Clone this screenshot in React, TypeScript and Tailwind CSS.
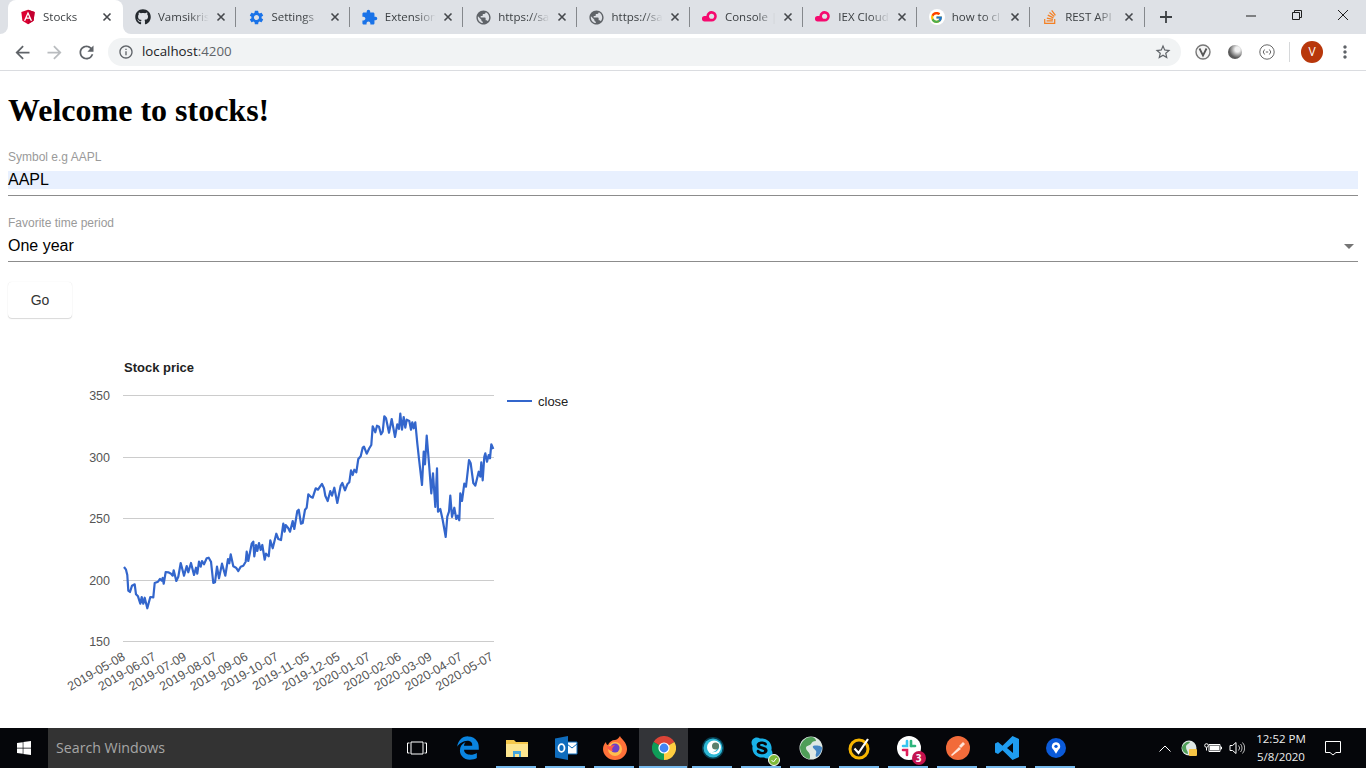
import React from 'react';
import { FaEdgeLegacy, FaGithub, FaSkype, FaStackOverflow, FaWindows } from 'react-icons/fa';
import { FcGoogle } from 'react-icons/fc';
import { MdArrowBack, MdArrowForward, MdExtension, MdInfoOutline, MdMoreVert, MdPublic, MdRefresh, MdSettings, MdStarBorder } from 'react-icons/md';

const AngularIcon = () => (
  <svg viewBox="0 0 24 24" className="w-4 h-4">
    <path d="M12 1 2 4.600l1.600 13.200L12 23l8.400-5.200L22 4.600z" fill="#dd0031" />
    <path d="M12 1v22l8.400-5.200L22 4.600z" fill="#c3002f" />
    <path d="M12 3.600 5.800 17.600h2.300l1.250-3.100h5.300l1.250 3.100h2.300zm1.800 9h-3.600L12 8.300z" fill="#fff" />
  </svg>
);

const CloudIcon = () => (
  <svg viewBox="0 0 20 16" className="w-4 h-[13px]">
    <path d="M12 0a6.500 6.500 0 0 1 0 13 H3.500a3.400 3.400 0 0 1-.4-6.800h2.400A6.500 6.500 0 0 1 12 0z" fill="#f50a6f" />
    <circle cx="12" cy="6.500" r="3.200" fill="#dee1e6" />
  </svg>
);

const tabs = [
  { label: 'Stocks', icon: <AngularIcon />, active: true },
  { label: 'Vamsikris', icon: <FaGithub className="w-4 h-4 text-[#24292e]" /> },
  { label: 'Settings', icon: <MdSettings className="w-[17px] h-[17px] text-[#1a73e8]" /> },
  { label: 'Extension', icon: <MdExtension className="w-[17px] h-[17px] text-[#1a73e8]" /> },
  { label: 'https://sa', icon: <MdPublic className="w-[17px] h-[17px] text-[#5f6368]" /> },
  { label: 'https://sa', icon: <MdPublic className="w-[17px] h-[17px] text-[#5f6368]" /> },
  { label: 'Console |', icon: <CloudIcon /> },
  { label: 'IEX Cloud', icon: <CloudIcon /> },
  { label: 'how to cl', icon: <span className="flex items-center justify-center w-4 h-4 rounded-full bg-white"><FcGoogle className="w-[13px] h-[13px]" /></span> },
  { label: 'REST API', icon: <FaStackOverflow className="w-4 h-4 text-[#f48024]" /> },
];

const TabClose = () => (
  <svg viewBox="0 0 10 10" className="w-2.5 h-2.5 shrink-0 text-[#45484c]">
    <path d="M1.500 1.500l7 7M8.500 1.500l-7 7" stroke="currentColor" strokeWidth="1.600" fill="none" />
  </svg>
);

function TabStrip() {
  return (
    <div className="flex h-[34px] bg-[#dee1e6] pl-2 relative">
      {tabs.map((tab, i) => (
        <div
          key={i}
          className={
            tab.active
              ? 'relative flex items-center w-[115px] shrink-0 pl-[12px] pr-[11px] bg-white rounded-t-lg'
              : 'relative flex items-center w-[113.4px] shrink-0 pl-[11px] pr-[10px]'
          }
        >
          {tab.active && (
            <>
              <span className="absolute -left-2 bottom-0 w-2 h-2 bg-white" />
              <span className="absolute -left-2 bottom-0 w-2 h-2 bg-[#dee1e6] rounded-br-lg" />
              <span className="absolute -right-2 bottom-0 w-2 h-2 bg-white" />
              <span className="absolute -right-2 bottom-0 w-2 h-2 bg-[#dee1e6] rounded-bl-lg" />
            </>
          )}
          <span className={tab.active ? 'flex items-center justify-center w-[18px] h-[18px] shrink-0 -ml-px' : 'flex items-center justify-center w-[18px] h-[18px] shrink-0'}>{tab.icon}</span>
          <span className="ml-[6px] flex-1 overflow-hidden whitespace-nowrap text-[11.5px] text-[#3c4043] font-['Open_Sans',sans-serif] [mask-image:linear-gradient(to_right,black_58%,transparent_94%)]">
            {tab.label}
          </span>
          <span className="ml-1"><TabClose /></span>
          {!tab.active && i > 1 && <span className="absolute -left-px top-[7px] h-[20px] w-px bg-[#85888c]" />}
          {i === tabs.length - 1 && <span className="absolute -right-px top-[7px] h-[20px] w-px bg-[#85888c]" />}
        </div>
      ))}
      <div className="flex items-center justify-center w-[44px] text-[#3c4043]">
        <svg viewBox="0 0 14 14" className="w-[14px] h-[14px]">
          <path d="M7 1v12M1 7h12" stroke="currentColor" strokeWidth="1.800" fill="none" />
        </svg>
      </div>
      <div className="ml-auto flex h-[30px] text-[#1f1f1f]">
        <div className="flex items-center justify-center w-[46px] pt-px">
          <svg viewBox="0 0 10 10" className="w-2.5 h-2.5"><path d="M0 5h10" stroke="currentColor" fill="none" /></svg>
        </div>
        <div className="flex items-center justify-center w-[46px]">
          <svg viewBox="0 0 10 10" className="w-2.5 h-2.5"><path d="M.5 2.500h7v7h-7zM2.500 2.500v-2h7v7h-2" stroke="currentColor" fill="none" /></svg>
        </div>
        <div className="flex items-center justify-center w-[46px]">
          <svg viewBox="0 0 10 10" className="w-2.5 h-2.5"><path d="M0 0l10 10M10 0 0 10" stroke="currentColor" fill="none" /></svg>
        </div>
      </div>
    </div>
  );
}

function Toolbar() {
  return (
    <div className="flex items-center h-[37px] pl-[12px] pr-[11px] bg-white border-b border-[#dadce0]">
      <MdArrowBack className="w-[21px] h-[21px] text-[#5f6368] mr-[11px]" />
      <MdArrowForward className="w-[21px] h-[21px] text-[#b9bcbf] mr-[11px]" />
      <MdRefresh className="w-[21px] h-[21px] text-[#5f6368]" />
      <div className="flex items-center ml-[11px] h-[28px] w-[1073px] rounded-full bg-[#f1f3f4] pl-[10px] pr-[9px]">
        <MdInfoOutline className="w-4 h-4 text-[#5f6368]" />
        <span className="ml-[8px] text-[13.300px] font-['Open_Sans',sans-serif] text-[#202124]">
          localhost<span className="text-[#5f6368]">:4200</span>
        </span>
        <MdStarBorder className="ml-auto w-[18px] h-[18px] text-[#5f6368]" />
      </div>
      <div className="flex items-center ml-[14px] gap-[17px]">
        <svg viewBox="0 0 16 16" className="w-4 h-4 text-[#5f6368]">
          <circle cx="8" cy="8" r="7" fill="#f4f4f4" stroke="#777" strokeWidth="1.400" />
          <path d="M4.500 4.500 8 11.500l3.500-7" stroke="#555" strokeWidth="1.800" fill="none" />
        </svg>
        <span className="w-[14px] h-[14px] rounded-full bg-[radial-gradient(circle_at_68%_32%,#f0f0f0_18%,#5a5a5a_62%)]" />
        <svg viewBox="0 0 16 16" className="w-4 h-4">
          <circle cx="8" cy="8" r="7.200" fill="none" stroke="#666" />
          <path d="M5.600 5.500 4.200 8l1.400 2.500M10.400 5.500 11.800 8l-1.400 2.500M6.800 8h2.400" stroke="#666" fill="none" />
        </svg>
        <span className="w-px h-[20px] bg-[#d6d8da] ml-[-3px] mr-[-6px]" />
        <span className="flex items-center justify-center w-[22px] h-[22px] rounded-full bg-[#b8370b] text-white text-[12px] font-['Open_Sans',sans-serif]">V</span>
        <MdMoreVert className="w-[20px] h-[20px] text-[#5f6368] -ml-[5px] -mr-[3px]" />
      </div>
    </div>
  );
}

// traced off the reference, in [x, y] page pixels at 3x
const leftTrace = [
  42,546, 48,554, 52,570, 55,617, 60,621, 66,602, 74,598, 78,628, 84,634, 91,656, 95,636, 100,656, 104,638, 112,670, 121,636, 130,637,
  134,594, 144,590, 150,582, 155,587, 158,579, 161,596, 167,561, 175,562, 183,566, 188,572, 191,556, 199,588, 205,575, 212,534, 215,545,
  222,572, 230,543, 235,562, 243,534, 252,570, 258,548, 262,566, 267,530, 272,545, 276,528, 282,538, 290,520, 296,518, 303,530, 310,594,
  315,592, 321,545, 327,580, 336,536, 346,572, 354,522, 358,535, 362,508, 370,544, 378,548, 385,558, 392,545, 400,542, 407,530, 410,500,
  415,528, 425,476, 430,470, 433,514, 438,480, 442,498, 447,474, 452,495, 457,480, 464,524, 468,506, 476,514, 481,466, 488,490, 499,446,
  505,462, 513,465, 520,416, 524,440, 527,420, 535,430, 540,440, 548,408, 553,432, 562,378, 566,374,
];
const rightTrace = [
  3,416, 8,414, 15,374, 20,368, 25,328, 32,335, 38,338, 47,310, 54,314, 60,305, 66,297, 72,310, 76,332, 83,348, 91,318, 96,332, 103,308,
  112,354, 122,302, 127,294, 135,316, 142,298, 148,292, 153,256, 158,270, 163,254, 169,262, 175,222, 182,214, 188,188, 192,185, 200,206,
  208,190, 214,180, 218,124, 226,142, 231,122, 237,125, 243,148, 248,140, 253,94, 258,100, 267,143, 275,102, 285,156, 292,118, 297,132,
  301,86, 306,134, 311,96, 316,128, 320,104, 328,108, 333,134, 337,112, 341,130, 346,112, 352,175, 357,222, 366,300, 371,200, 375,238,
  380,152, 387,235, 394,325, 399,265, 406,366, 411,250, 414,380, 421,372, 428,405, 437,456, 442,395, 447,380, 451,332, 456,396, 463,368,
  469,402, 473,392, 478,406, 481,325, 486,348, 493,296, 498,305, 507,225, 512,235, 520,294, 526,302, 536,260, 541,275, 544,232, 548,286,
  553,215, 556,205, 561,230, 566,210, 570,220, 574,178, 580,192,
];

const toPoints = (trace: number[], left: number) => {
  const out: string[] = [];
  for (let i = 0; i < trace.length; i += 2) {
    out.push(`${(left + trace[i] / 3).toFixed(1)},${(385 + trace[i + 1] / 3).toFixed(1)}`);
  }
  return out.join(' ');
};

const yTicks = [
  { label: '350', y: 395.5 },
  { label: '300', y: 457.5 },
  { label: '250', y: 518.5 },
  { label: '200', y: 580.5 },
  { label: '150', y: 641.5 },
];

const xTicks = [
  '2019-05-08', '2019-06-07', '2019-07-09', '2019-08-07', '2019-09-06', '2019-10-07', '2019-11-05',
  '2019-12-05', '2020-01-07', '2020-02-06', '2020-03-09', '2020-04-07', '2020-05-07',
];

function StockChart() {
  return (
    <svg viewBox="0 340 600 388" className="block w-[600px] h-[388px] font-['Liberation_Sans',sans-serif]">
      <text x="124" y="372" fontSize="13" fontWeight="700" fill="#222">Stock price</text>
      {yTicks.map((t) => (
        <g key={t.label}>
          <line x1="123" x2="494" y1={t.y} y2={t.y} stroke="#cccccc" />
          <text x="110" y={t.y + 4} fontSize="12.5" textAnchor="end" fill="#555">{t.label}</text>
        </g>
      ))}
      {xTicks.map((t, i) => {
        const x = 126 + i * 30.67;
        return (
          <text key={t} x={x} y={659} fontSize="12.5" textAnchor="end" fill="#555" transform={`rotate(-30 ${x} 659)`}>
            {t}
          </text>
        );
      })}
      <polyline
        points={`${toPoints(leftTrace, 110)} ${toPoints(rightTrace, 300)}`}
        fill="none"
        stroke="#3366cc"
        strokeWidth="2.200"
        strokeLinejoin="round"
      />
      <line x1="507" x2="532" y1="401" y2="401" stroke="#3366cc" strokeWidth="2" />
      <text x="538" y="405.500" fontSize="13" fill="#222">close</text>
    </svg>
  );
}

function StockForm() {
  return (
    <div className="px-2 font-['Liberation_Sans',sans-serif]">
      <h1 className="mt-[21px] mb-0 text-[32px] leading-[37px] font-bold text-black font-['Liberation_Serif',serif]">Welcome to stocks!</h1>
      <div className="mt-[21px] border-b border-[#8c8c8c] h-[46px]">
        <div className="text-[12px] leading-[14px] text-[#9a9a9a]">Symbol e.g AAPL</div>
        <div className="mt-[7px] h-[18px] bg-[#e8f0fe] text-[16px] leading-[18px] text-black">AAPL</div>
      </div>
      <div className="mt-[20px] border-b border-[#8c8c8c] h-[46px]">
        <div className="text-[12px] leading-[14px] text-[#9a9a9a]">Favorite time period</div>
        <div className="mt-[7px] flex items-center justify-between h-[18px] text-[16px] leading-[18px] text-black">
          One year
          <span className="mr-[4px] w-0 h-0 border-x-[5px] border-x-transparent border-t-[5px] border-t-[#757575]" />
        </div>
      </div>
      <button className="block mt-[20px] w-16 h-9 rounded bg-white text-[14px] text-[#333333] shadow-[0_1px_1px_rgba(0,0,0,0.14),0_0_1px_rgba(0,0,0,0.12)]">
        Go
      </button>
    </div>
  );
}

const FolderIcon = () => (
  <svg viewBox="0 0 24 24" className="w-6 h-6">
    <path d="M1 4h8l2 2h12v15H1z" fill="#f5c84c" />
    <path d="M1 8h22v13H1z" fill="#fde58f" />
    <path d="M8 15h8v6h-2v-3h-4v3H8z" fill="#46a6dc" />
  </svg>
);

const OutlookIcon = () => (
  <svg viewBox="0 0 24 24" className="w-6 h-6">
    <path d="M12 6h11v12H12z" fill="#fff" stroke="#0f6cbd" />
    <path d="M13 8l5 4 5-4" stroke="#0f6cbd" fill="none" />
    <path d="M1 2.500 14 0v24L1 21.500z" fill="#0f6cbd" />
    <ellipse cx="7.500" cy="12" rx="3" ry="3.800" fill="none" stroke="#fff" strokeWidth="1.800" />
  </svg>
);

const FirefoxIcon = () => (
  <svg viewBox="0 0 24 24" className="w-6 h-6">
    <path d="M17 0c1 3 7 6 7 13a12 11 0 1 1-24 0c0-3 1-5 3-7 0 2 1 3 2 3 1-3 4-5 7-5 1 0 3-1 5-4z" fill="#ff7139" />
    <circle cx="12" cy="13" r="7" fill="#ffbd4f" />
    <circle cx="12" cy="12" r="4.500" fill="#6e3fc9" />
    <path d="M4 10c3 1 5-1 8-1-2 2-4 4-2 6-3 0-6-2-6-5z" fill="#ff5a4a" />
  </svg>
);

const ChromeIcon = () => (
  <svg viewBox="0 0 24 24" className="w-6 h-6">
    <path d="M12 12 1.600 6A12 12 0 0 1 22.400 6z" fill="#db4437" />
    <path d="M12 12 22.400 6A12 12 0 0 1 12 24z" fill="#ffcd40" />
    <path d="M12 12 12 24A12 12 0 0 1 1.600 6z" fill="#0f9d58" />
    <circle cx="12" cy="12" r="5.600" fill="#fff" />
    <circle cx="12" cy="12" r="4.400" fill="#4285f4" />
  </svg>
);

const RingIcon = () => (
  <svg viewBox="0 0 24 24" className="w-6 h-6">
    <circle cx="12" cy="12" r="11" fill="#063f52" />
    <circle cx="12" cy="12" r="9.500" fill="#2db7d5" />
    <circle cx="13" cy="11.500" r="7" fill="#fff" />
    <path d="M9 16c5 1 9-3 8-9 3 4 0 11-8 9z" fill="#2db7d5" />
    <circle cx="14.500" cy="10" r="3.500" fill="#5c7f6c" />
  </svg>
);

const SkypeIcon = () => (
  <span className="relative block w-6 h-6">
    <FaSkype className="w-6 h-6 text-[#1ab2e8]" />
    <span className="absolute -right-1.5 -bottom-1.5 flex items-center justify-center w-[12px] h-[12px] rounded-full bg-[#7fba3a] border border-white text-white">
      <svg viewBox="0 0 8 8" className="w-2 h-2"><path d="M1.500 4l2 2 3-4" stroke="currentColor" fill="none" /></svg>
    </span>
  </span>
);

const GlobeIcon = () => (
  <svg viewBox="0 0 24 24" className="w-6 h-6">
    <circle cx="12" cy="12" r="11.500" fill="#dfe8e4" />
    <path d="M1 11C3 4 8 1 12 1c3 0 5 2 5 4-3 0-4 1-5 3s-5 1-5 4 4 4 4 8c0 2 0 3-1 3-5-1-9-6-9-12z" fill="#4f9e58" />
    <path d="M14 10c4-1 9 0 9 2s-2 8-6 9c-1-3 1-4 0-6s-4-3-3-5z" fill="#4687c4" />
  </svg>
);

const NortonIcon = () => (
  <svg viewBox="0 0 24 24" className="w-6 h-6">
    <circle cx="11" cy="13" r="9" fill="#111" stroke="#f7b500" strokeWidth="3" />
    <path d="M6.500 12.500 10.500 17 20 3" fill="none" stroke="#fff" strokeWidth="2.200" />
  </svg>
);

const SlackIcon = () => (
  <span className="relative block w-6 h-6">
    <svg viewBox="0 0 24 24" className="w-6 h-6">
      <circle cx="12" cy="12" r="12" fill="#fff" />
      <path d="M10 5v5H6" stroke="#36c5f0" strokeWidth="2.600" fill="none" strokeLinecap="round" />
      <path d="M14 5v5h0" stroke="#2eb67d" strokeWidth="2.600" fill="none" strokeLinecap="round" />
      <path d="M14 10h4" stroke="#2eb67d" strokeWidth="2.600" fill="none" strokeLinecap="round" />
      <path d="M10 19v-5H6" stroke="#e01e5a" strokeWidth="2.600" fill="none" strokeLinecap="round" />
    </svg>
    <span className="absolute -right-[5px] -bottom-[5px] flex items-center justify-center w-[14px] h-[14px] rounded-full bg-[#c4124e] text-white text-[10px] font-bold leading-none font-['Open_Sans',sans-serif]">3</span>
  </span>
);

const PostmanIcon = () => (
  <svg viewBox="0 0 24 24" className="w-6 h-6">
    <circle cx="12" cy="12" r="12" fill="#f26b3a" />
    <path d="M5 19 13 11l2 2-9 7zM13 10l4-4 2 2-4 4z" fill="#ffe3d6" />
  </svg>
);

const VscodeIcon = () => (
  <svg viewBox="0 0 24 24" className="w-6 h-6">
    <path d="M17.500 0 24 3v18l-6.500 3-10-9.700L3 18l-3-1.500v-9L3 6l4.500 3.700zM18 7l-6 5 6 5z" fill="#1f9cf0" />
  </svg>
);

const PinIcon = () => (
  <svg viewBox="0 0 24 24" className="w-5 h-5">
    <circle cx="12" cy="12" r="12" fill="#0b5ad9" />
    <path d="M12 5a5 5 0 0 0-3 9l3 5 3-5a5 5 0 0 0-3-9z" fill="#fff" />
    <circle cx="12" cy="10" r="2" fill="#0b5ad9" />
  </svg>
);

const taskItems = [
  { icon: <FolderIcon /> },
  { icon: <OutlookIcon /> },
  { icon: <FirefoxIcon /> },
  { icon: <ChromeIcon />, active: true },
  { icon: <RingIcon /> },
  { icon: <SkypeIcon /> },
  { icon: <GlobeIcon /> },
  { icon: <NortonIcon /> },
  { icon: <SlackIcon /> },
  { icon: <PostmanIcon /> },
  { icon: <VscodeIcon /> },
  { icon: <PinIcon /> },
];

function Taskbar() {
  return (
    <div className="flex items-stretch h-10 bg-[#05060a] text-white font-['Open_Sans',sans-serif]">
      <div className="flex items-center justify-center w-12">
        <FaWindows className="w-4 h-4 text-white" />
      </div>
      <div className="flex items-center w-[344px] pl-2 bg-[#333333] text-[14.200px] text-[#a6a6a6]">Search Windows</div>
      <div className="flex items-center justify-center w-[49px]">
        <svg viewBox="0 0 20 14" className="w-5 h-[14px]">
          <path d="M4 1h12v12H4zM2.500 2H.5v10h2M17.500 2h2v10h-2" stroke="#fff" fill="none" />
        </svg>
      </div>
      <div className="w-[2px]" />
      <div className="flex items-center justify-center w-[49px]">
        <FaEdgeLegacy className="w-6 h-6 text-[#0a84e0]" />
      </div>
      {taskItems.map((item, i) => (
        <div
          key={i}
          className={
            item.active
              ? 'relative flex items-center justify-center w-[49px] bg-[#333438]'
              : 'relative flex items-center justify-center w-[49px]'
          }
        >
          {item.icon}
          <span
            className={
              item.active
                ? 'absolute bottom-0 left-0 right-[1px] h-[2px] bg-[#76b9ed]'
                : 'absolute bottom-0 left-1 right-[5px] h-[2px] bg-[#76b9ed]'
            }
          />
        </div>
      ))}
      <div className="ml-auto flex items-center mr-[12px]">
        <svg viewBox="0 0 12 7" className="w-3 h-[7px] mr-[10px]"><path d="M.5 6.500 6 1l5.500 5.500" stroke="#fff" fill="none" /></svg>
        <span className="relative w-4 h-4 mr-[7px]">
          <svg viewBox="0 0 16 16" className="w-4 h-4">
            <circle cx="8" cy="8" r="7.500" fill="#dfe8e4" />
            <path d="M1 7c2-4 5-6 8-5-1 2-4 2-4 5s2 4 2 7c-3 0-6-3-6-7z" fill="#4f9e58" />
          </svg>
          <span className="absolute right-0 bottom-0 w-2 h-[7px] rounded-[1px] bg-[#f7c544]" />
        </span>
        <svg viewBox="0 0 18 12" className="w-[18px] h-3 mr-[7px]">
          <path d="M5 2.500h11v7H5zM16 5h1.500v2H16" stroke="#fff" fill="none" />
          <path d="M6 3.500h9v5H6z" fill="#fff" />
          <circle cx="2.500" cy="3.500" r="1.800" stroke="#fff" fill="none" />
          <path d="M2.500 5.500v3" stroke="#fff" />
        </svg>
        <svg viewBox="0 0 16 14" className="w-4 h-[14px]">
          <path d="M1 4.500h2.500L7 1.500v11l-3.500-3H1z" stroke="#fff" fill="none" />
          <path d="M9.500 4.500a3.500 3.500 0 0 1 0 5M11.500 3a6 6 0 0 1 0 8M13.500 1.500a8 8 0 0 1 0 11" stroke="#bbb" fill="none" />
        </svg>
        <div className="w-[62px] ml-[5px] text-center text-[11.500px] leading-[18px] text-[#eeeeee]">
          <div>12:52 PM</div>
          <div>5/8/2020</div>
        </div>
        <div className="flex items-center justify-center w-[42px]">
          <svg viewBox="0 0 16 15" className="w-4 h-[15px]">
            <path d="M.5.500h15v11h-4.500l-3 2.500-3-2.500H.5z" stroke="#fff" fill="none" />
          </svg>
        </div>
      </div>
    </div>
  );
}

export default function App() {
  return (
    <div className="flex flex-col h-screen overflow-hidden bg-white">
      <TabStrip />
      <Toolbar />
      <main className="flex-1 overflow-hidden">
        <StockForm />
        <div className="mt-[22px]">
          <StockChart />
        </div>
      </main>
      <Taskbar />
    </div>
  );
}
